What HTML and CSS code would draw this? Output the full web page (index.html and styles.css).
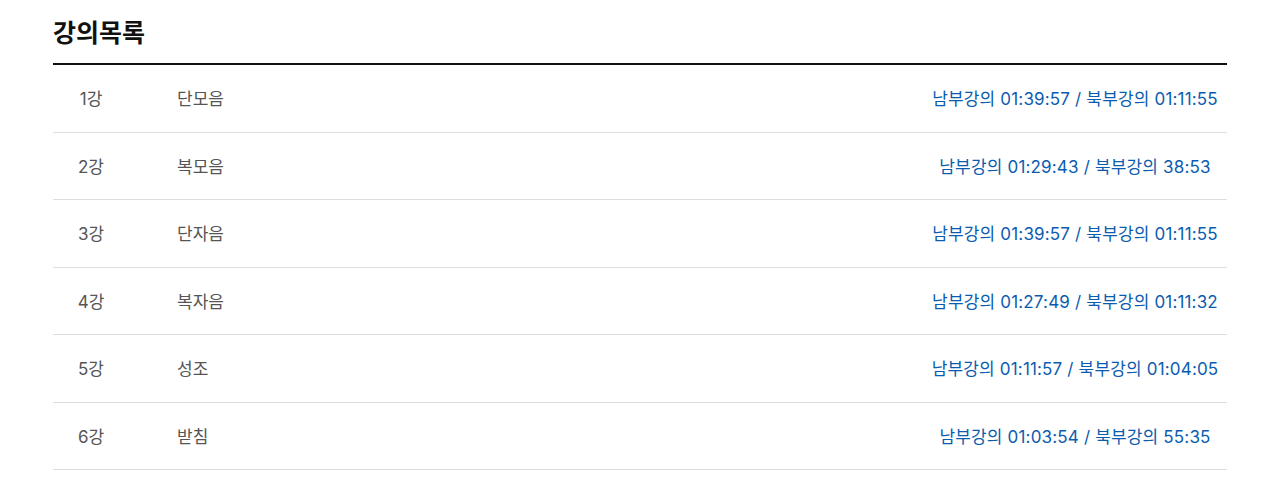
FILE: index.html
```html
<!DOCTYPE html>
<html lang="ko">
<head>
<meta charset="utf-8">
<title>강의목록</title>
<link rel="stylesheet" href="styles.css">
</head>
<body>
<section class="lectures">
  <h2 class="lectures-title">강의목록</h2>
  <ul class="lecture-list">
    <li class="lecture-row"><span class="lecture-no">1강</span><span class="lecture-name">단모음</span><span class="lecture-time">남부강의 01:39:57 / 북부강의 01:11:55</span></li>
    <li class="lecture-row"><span class="lecture-no">2강</span><span class="lecture-name">복모음</span><span class="lecture-time">남부강의 01:29:43 / 북부강의 38:53</span></li>
    <li class="lecture-row"><span class="lecture-no">3강</span><span class="lecture-name">단자음</span><span class="lecture-time">남부강의 01:39:57 / 북부강의 01:11:55</span></li>
    <li class="lecture-row"><span class="lecture-no">4강</span><span class="lecture-name">복자음</span><span class="lecture-time">남부강의 01:27:49 / 북부강의 01:11:32</span></li>
    <li class="lecture-row"><span class="lecture-no">5강</span><span class="lecture-name">성조</span><span class="lecture-time">남부강의 01:11:57 / 북부강의 01:04:05</span></li>
    <li class="lecture-row"><span class="lecture-no">6강</span><span class="lecture-name">받침</span><span class="lecture-time">남부강의 01:03:54 / 북부강의 55:35</span></li>
  </ul>
</section>
</body>
</html>
```

FILE: styles.css
```css
html, body {
  margin: 0;
  padding: 0;
  background: #ffffff;
}

body {
  font-family: "Inter", "Noto Sans CJK KR", sans-serif;
  color: #555555;
}

.lectures {
  width: 1174px;
  margin-left: 53px;
}

.lectures-title {
  margin: 0;
  display: flex;
  align-items: center;
  font-size: 25px;
  font-weight: 700;
  color: #111111;
  border-bottom: 2px solid #111111;
  box-sizing: border-box;
  height: 65px;
  padding-bottom: 2px;
}

.lecture-list {
  list-style: none;
  margin: 0;
  padding: 0;
}

.lecture-row {
  display: grid;
  grid-template-columns: 76px 1fr 304px;
  align-items: center;
  height: 67.5px;
  box-sizing: border-box;
  border-bottom: 1px solid #dddddd;
  font-size: 17px;
  padding-bottom: 1px;
}

.lecture-no {
  text-align: center;
  color: #555555;
}

.lecture-name {
  padding-left: 48px;
  color: #555555;
}

.lecture-time {
  text-align: center;
  color: #0b5cb0;
  white-space: nowrap;
  letter-spacing: 0.17px;
}
```
